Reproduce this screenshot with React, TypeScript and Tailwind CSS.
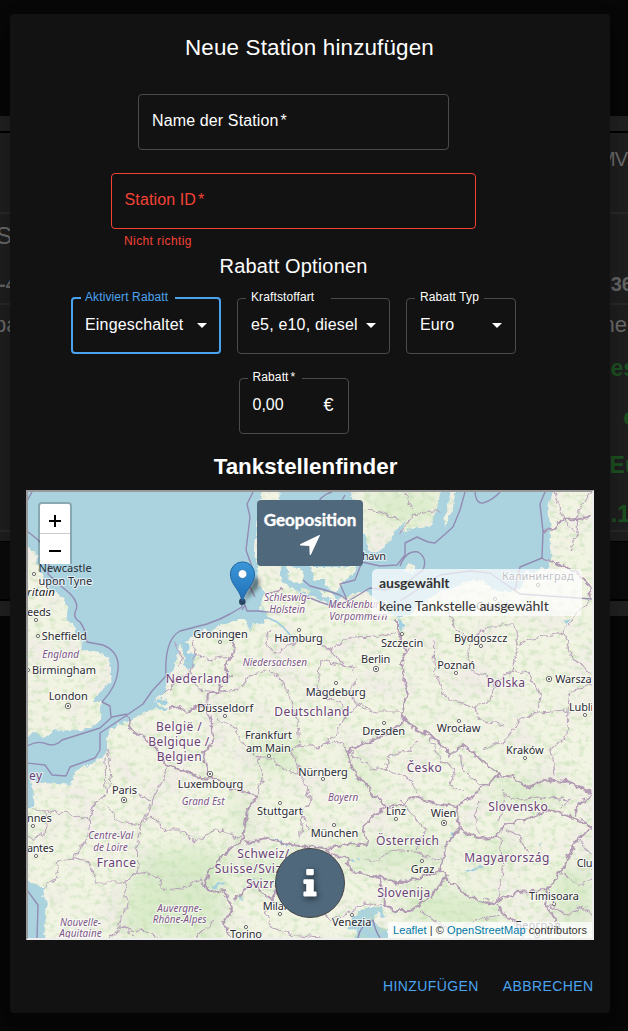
import React from "react";

type LabelKind = "city" | "country" | "region" | "nation";
type Label = [text: string, x1: number, x2: number, y: number, kind?: LabelKind];

const labels: Label[] = [
  ["upon Tyne", 38.5, 92.3, 585],
  ["ritain", 27, 55, 595.7, "nation"],
  ["eeds", 27, 50.7, 616.3],
  ["Sheffield", 41.7, 86.7, 640.3],
  ["England", 42.3, 79, 658, "region"],
  ["Birmingham", 32, 96, 674.3],
  ["London", 48.7, 87.7, 700],
  ["Groningen", 193.3, 247.7, 638.3],
  ["Nederland", 165.7, 229, 682.7, "country"],
  ["Düsseldorf", 197.3, 253.3, 712.3],
  ["Schleswig-", 264.3, 310, 601.3, "region"],
  ["Holstein", 269.3, 305, 613.3, "region"],
  ["Mecklenburg-", 328.3, 388, 608, "region"],
  ["Vorpommern", 329.3, 387.3, 620.3, "region"],
  ["Hamburg", 274.3, 322.7, 642.3],
  ["Niedersachsen", 242.7, 307, 666.3, "region"],
  ["Berlin", 361, 390.3, 662.7],
  ["Magdeburg", 305.7, 365.7, 695.7],
  ["Deutschland", 274.3, 349.3, 716, "country"],
  ["København", 331, 386, 560],
  ["Szczecin", 381, 423.3, 647],
  ["Калининград", 502, 573.7, 580.3],
  ["Gdańsk", 476, 511, 610],
  ["Bydgoszcz", 454, 507.3, 642],
  ["Poznań", 437.3, 475, 668.7],
  ["Polska", 486.7, 525, 687.3, "country"],
  ["Warszawa", 555.3, 606, 682.7],
  ["Lublin", 569, 600, 711],
  ["België /", 156, 201.7, 730.7, "country"],
  ["Belgique /", 148.3, 209.3, 745.7, "country"],
  ["Belgien", 156.7, 201.7, 760.7, "country"],
  ["ey", 29, 42, 780, "country"],
  ["Paris", 112, 137, 794],
  ["Luxembourg", 177.7, 243.3, 788.3],
  ["Grand Est", 181.7, 224.7, 805.3, "region"],
  ["nnes", 27, 51.7, 821.7],
  ["antes", 27, 53.7, 851.7],
  ["Centre-Val", 88.3, 133.3, 839, "region"],
  ["de Loire", 93.3, 127.7, 850.7, "region"],
  ["France", 96.7, 136, 867, "country"],
  ["Auvergne-", 157.3, 202, 911.7, "region"],
  ["Rhône-Alpes", 152.7, 206.7, 923.3, "region"],
  ["Nouvelle-", 60, 101, 926, "region"],
  ["Aquitaine", 59.3, 101.7, 937.3, "region"],
  ["Frankfurt", 245, 292, 738.7],
  ["am Main", 246, 290.7, 752],
  ["Dresden", 362.3, 405, 735],
  ["Nürnberg", 298.3, 347.7, 775.7],
  ["Bayern", 328, 358.3, 801, "region"],
  ["Stuttgart", 257, 302.7, 815],
  ["Linz", 386, 406, 814.7],
  ["München", 310.7, 358.3, 837.3],
  ["Österreich", 376, 439, 845, "country"],
  ["Schweiz/", 237.3, 289.3, 858.3, "country"],
  ["Suisse/Svizzera/", 214.7, 312, 873.3, "country"],
  ["Svizra", 246, 281, 888, "country"],
  ["Milano", 262.7, 297, 910],
  ["Venezia", 332, 371.3, 926],
  ["Torino", 230, 262, 937.7],
  ["Slovenija", 377.3, 430.3, 896.7, "country"],
  ["Wrocław", 436.7, 480.3, 732.3],
  ["Kraków", 506, 543.7, 753.7],
  ["Česko", 406.7, 441.7, 772.3, "country"],
  ["Slovensko", 488.3, 547.7, 811, "country"],
  ["Wien", 430.7, 456.3, 816.7],
  ["Magyarország", 464.3, 549.3, 862, "country"],
  ["Cluj", 576.7, 595, 866.7],
  ["Graz", 410.7, 434.3, 873.3],
  ["Timișoara", 529, 579, 900.3],
  ["Београд", 515.3, 560.7, 928.7],
];

const labelStyle: Record<LabelKind, { size: number; fill: string; italic: boolean }> = {
  city: { size: 11, fill: "#2b2b33", italic: false },
  country: { size: 12, fill: "#6b4276", italic: false },
  region: { size: 10, fill: "#7d5688", italic: true },
  nation: { size: 11.5, fill: "#1b1b20", italic: true },
};

const towns: [number, number][] = [
  [34, 574], [36, 620], [38, 636], [28, 670], [220, 642], [299, 630], [336, 683], [402, 634],
  [538, 585], [495, 599], [481, 646], [456, 673], [585, 715], [33, 826], [36, 856], [225, 716],
  [269, 756], [384, 723], [323, 779], [280, 803], [396, 819], [334, 825], [280, 914], [352, 915],
  [246, 927], [459, 721], [525, 758], [422, 861], [554, 904],
];

const capitals: [number, number][] = [
  [68, 706], [376, 669], [549, 679], [124, 800], [210, 774], [444, 823], [537, 935],
];

const land = [
  "M20 545 28 546 35 550 37 564 42 577 53 591 63 599 68 608 66 616 72 626 77 634 82 644 80 649 90 651.5 103 654 109 659 111 666 111 677 106 687 97 695 92 702 101 702 100 707 102 713 98 722 87 728 70 731 53 730 43 738 37 734 20 735Z",
  "M44 945 46 910 48 903 43 896 46 887 37 885 20 879V809L35 808 33 790 30 781 43 782 57 783 70 785 75 780 73 773 87 765 103 757 107 750 107 733 117 725 128 722 137 716 148 711 155 708 165 710 152 702 160 697 167 692 166 684 173 671 177 657 181 644 193 636 207 631 220 626 232 621 247 621 250 631 255 622 265 626 267 617 260 607 265 594 258 584 257 567 255 551 257 527 260 504 263 484H278L282 567 282 581 293 587 300 594 320 599 333 604 350 594 367 591 391 614 402 619 420 606 440 591 467 582 483 579 492 591 512 592 523 584 527 571 547 569 552 551 550 527 548 504 557 484H600V945Z",
  "M350 484H443L438 504 433 525 414 528 402 532 405 520 395 531 390 541 380 552 368 550 366 540 358 520Z",
  "M456 484 453 508 446 525 444 520 449 500 453 484Z",
  "M407 562 416 565 413 573 406 568Z",
  "M285 567 300 568 305 574 303 584 294 583 287 577Z",
  "M310 567H356L352 575 345 580 338 591 330 588 324 580 314 580Z",
  "M318 590 332 592 335 600 324 598ZM300 588 312 590 309 594 300 592Z",
];

const borders = [
  "M235 632 233 657 223 664 230 676 220 681 218 692 208 694 207 705 208 714 212 730 213 743 203 752 206 765 210 778",
  "M168 709 180 707 187 711 197 706 208 708",
  "M127 715 132 731 147 740 157 750 167 765 187 772 200 778 217 779 230 788 257 796 247 810 243 840 230 848 217 863 210 870 205 885 211 892 223 890 233 910 223 923 233 938",
  "M243 843 267 838 290 845 310 847 327 848 353 843 367 845 363 827 377 813 387 807 370 790 353 770 348 750 367 743 390 733 407 720 412 728 433 737 450 755 463 745 482 760 500 775 513 777 527 788 543 780 567 782 592 793",
  "M387 807 400 805 413 797 433 802 457 807 470 798 483 787 500 775",
  "M457 807 460 828 477 838 498 837 503 825 533 818 547 810 567 815 592 827 577 840 560 873 547 890 517 892 493 903 467 897 447 877 440 870 443 857 447 843 460 828",
  "M592 793 577 807 575 816",
  "M440 870 420 877 400 883 377 877 350 870 348 857 330 856 326 848",
  "M447 877 427 900 410 910 395 910 385 905 384 890 377 877",
  "M397 620 397 631 407 650 402 664 407 691 402 714 412 728",
  "M233 900 253 883 262 893 273 900 280 885 300 893 312 885 320 870 330 856",
  "M498 903 503 916 520 925 525 938M547 890 545 905 556 920 560 938",
  "M543 531 552 530 563 519 592 517M542 558 557 563 577 572 588 584 590 597",
  "M265 594 275 592 282 590",
];

const regions = [
  "M28 838 45 835 47 812 33 810M47 812 70 813 90 822 92 807 106 793 105 757",
  "M92 807 87 840 73 858 55 862 58 878 45 887M73 858 88 862 97 882 125 882 138 872 137 840 142 825 120 822 107 805",
  "M125 882 127 905 118 925 135 935M138 872 158 877 163 890 183 888 200 880 211 892",
  "M142 825 150 815 165 830 180 830 195 842 217 828 243 840M165 765 163 780 155 795 150 805 142 825",
  "M107 750 111 770 108 795M137 794 150 800M110 938 120 928 145 932 160 938M195 938 215 920",
  "M257 796 263 775 258 758 272 758 284 770 300 772 310 800 303 815 300 840",
  "M217 720 235 727 240 740 258 758M300 772 290 750 300 745 318 747 335 740 348 750M300 745 298 722 290 700 285 685 270 670 250 675 240 690 218 692",
  "M270 630 265 645 275 653 290 645 300 640 315 640 330 650 345 665 320 660 318 690 340 705 345 718 360 705 375 712 400 712",
  "M330 650 350 637 380 636 397 631M345 665 355 670M360 705 350 695 355 680M320 747 335 735 345 718",
  "M174 640 182 660 178 668M193 640 195 655 207 660 233 657M195 655 190 672 200 690 218 692M190 672 178 680 165 692",
  "M434 640 433 665 442 690 450 700 475 707 490 700 495 685 485 675 470 670 468 655 472 640 455 630 450 610",
  "M472 640 490 625 515 625 518 645 512 670 500 680 495 685M518 645 545 635 564 632 575 615 590 600M564 632 570 655 580 665 592 672",
  "M512 670 530 675 540 695 538 712 520 720 505 740 483 750M538 712 568 710 567 735 552 750 555 775M475 707 480 720 505 725M568 710 570 690 592 685",
  "M400 535 412 515 440 510M405 492 413 510M366 510 380 512 400 520",
  "M348 750 370 768 385 770 390 755 410 750 415 740M385 770 405 775 420 795M430 737 440 760 455 770 450 785 463 790",
  "M460 755 463 770 485 787M480 800 475 815 478 835M505 795 520 800 540 797 570 800 560 810M505 790 500 820",
  "M500 837 503 870 498 900M505 830 520 838 528 852M303 815 310 830M365 860 380 860 390 850 415 852 440 860M400 800 410 812 425 830 415 850",
  "M560 873 580 885 592 880M545 905 570 915 580 905 592 915M577 840 592 855M555 492 563 519 577 535 570 550M592 492 578 510 577 535",
  "M265 910 270 925 290 935 320 938M300 893 315 905 330 920 345 915 365 902 385 905M440 925 455 935 475 920 500 916M420 910 440 925",
];

const maritime = [
  "M32 492 27 501M27 531 37 539 50 552 48 574 62 587Q80 600 76 610 72 617 80 622 86 630 87 642L103 645Q120 652 118 670 117 686 102 702L110 706 111 717",
  "M27 746Q38 740 47 744 55 747 62 740L100 728 112 717 127 714",
  "M27 763 45 765 52 775 66 776 70 767 95 758 100 750V733L127 715 143 704 152 691 166 676Q164 640 180 631L207 624 220 619 230 614 242 607 240 590",
  "M242 610 245 605 247 611 258 611 278 613M255 597 247 581 252 567 246 550 250 517 247 504 253 492",
  "M465 492 460 510 453 527 435 543 428 542 417 537 405 543V555L397 565 380 566 362 562 355 580 340 584 347 600 340 595 325 590 310 586 303 580",
  "M400 566Q406 550 418 552 428 558 423 570L405 584 385 590 370 588 350 600 335 607 320 602 300 594",
  "M475 492Q476 504 483 503 493 500 500 492M545 492 540 504 543 531 542 558 520 567 515 590M400 601 440 575 470 571 490 573 520 594 592 599",
  "M27 890 38 905 37 938M315 508Q320 495 332 492M345 495 340 504",
];

const lakes = [
  "M464 872 475 868 483 864 480 869 467 873Z",
  "M270 838 280 840 290 847 282 844Z",
  "M211 886 224 882 226 883 215 889Z",
  "M252 879 256 877 257 881ZM238 897 241 893 243 899ZM350 860 354 859 354 862ZM357 859 361 858 359 861ZM450 837 454 831 452 840ZM538 847 543 840 540 847Z",
  "M181 640 187 642 188 652 196 655 195 664 187 672 184 660ZM563 621 570 619 566 624ZM400 618 405 625 402 634 398 625Z",
  "M150 704 165 698 170 703 158 704ZM152 708 168 706 163 710Z",
];

const greens = [
  "M367 494 440 494 433 518 400 525 370 510Z",
  "M462 868 500 840 520 845 500 860ZM495 778 570 790 540 808 500 800Z",
  "M340 850 440 835 435 865 350 868ZM240 860 320 855 330 880 250 890Z",
  "M400 880 500 905 490 935 410 920ZM230 800 250 805 250 850 240 840ZM350 750 380 785 370 795 350 775Z",
  "M150 850 230 850 220 935 120 935 130 880ZM250 735 300 740 300 770 260 770ZM550 870 592 870 592 930 560 930Z",
];

function EuropeMap() {
  return (
    <svg viewBox="28 492 564 446" className="block h-full w-full" aria-hidden="true">
      <defs>
        <clipPath id="land">
          {land.map((d) => <path key={d} d={d} />)}
        </clipPath>
        <filter id="woods" x="0" y="0" width="100%" height="100%" colorInterpolationFilters="sRGB">
          <feTurbulence type="fractalNoise" baseFrequency="0.14 0.18" numOctaves="4" seed="23" />
          <feColorMatrix values="0 0 0 0 .75  0 0 0 0 .87  0 0 0 0 .69  3 0 0 0 -1.45" />
        </filter>
        <filter id="fields" x="0" y="0" width="100%" height="100%" colorInterpolationFilters="sRGB">
          <feTurbulence type="fractalNoise" baseFrequency="0.03" numOctaves="4" seed="4" />
          <feColorMatrix values="0 0 0 0 .94  0 0 0 0 .92  0 0 0 0 .905  0 3 0 0 -1.35" />
        </filter>
        <filter id="coast" x="-5%" y="-5%" width="110%" height="110%" colorInterpolationFilters="sRGB">
          <feTurbulence type="fractalNoise" baseFrequency="0.13" numOctaves="3" seed="7" result="n" />
          <feDisplacementMap in="SourceGraphic" in2="n" scale="8" xChannelSelector="R" yChannelSelector="G" />
        </filter>
        <filter id="soft"><feGaussianBlur stdDeviation="9" /></filter>
        <linearGradient id="pin" x1="0" y1="0" x2="0" y2="1">
          <stop offset="0" stopColor="#3a97d8" />
          <stop offset="1" stopColor="#2170b8" />
        </linearGradient>
        <filter id="pinShadow" x="-50%" y="-50%" width="200%" height="200%"><feGaussianBlur stdDeviation="2" /></filter>
      </defs>
      <rect x="28" y="492" width="564" height="446" fill="#aad3df" />
      <g filter="url(#coast)">
        <g clipPath="url(#land)">
          <rect x="20" y="484" width="580" height="460" fill="#f2f4e3" />
          <rect x="20" y="484" width="580" height="460" filter="url(#fields)" opacity="0.8" />
          <g filter="url(#soft)" fill="#c6e4b5" opacity="0.55">
            {greens.map((d) => <path key={d} d={d} />)}
          </g>
        </g>
        <path d="M352 945 357 930 348 927 357 913 370 907 382 907 384 917 376 913 375 925 388 930V945Z" fill="#aad3df" />
        {lakes.map((d) => <path key={d} d={d} fill="#a3cfe2" />)}
      </g>
      <g clipPath="url(#land)">
        <rect x="20" y="484" width="580" height="460" filter="url(#woods)" opacity="0.55" />
      </g>
      <g filter="url(#coast)">
        <g fill="none" stroke="#b49bb8" strokeWidth="1.1" opacity="0.9">
          {regions.map((d) => <path key={d} d={d} />)}
        </g>
        <g fill="none" stroke="#a88bad" strokeWidth="2" strokeLinejoin="round" opacity="0.85">
          {borders.map((d) => <path key={d} d={d} />)}
        </g>
      </g>
      <g fill="none" stroke="#8e7fac" strokeWidth="1.4" strokeLinejoin="round" opacity="0.85">
        {maritime.map((d) => <path key={d} d={d} />)}
        <path d="M358 938Q360 925 373 920M373 920Q375 930 380 938" />
      </g>
      <path d="M266 617 277 622 284 628 292 637 298 641" fill="none" stroke="#9ccbe0" strokeWidth="1.6" />
      <g fill="#fff" stroke="#4b4b4b" strokeWidth="0.8">
        {towns.map(([x, y]) => <circle key={`${x}-${y}`} cx={x} cy={y} r="1.6" />)}
        {capitals.map(([x, y]) => <circle key={`${x}-${y}`} cx={x} cy={y} r="2.7" />)}
      </g>
      <g fill="#4b4b4b">
        {capitals.map(([x, y]) => <circle key={`${x}-${y}`} cx={x} cy={y} r="1.1" />)}
      </g>
      <g fontFamily="'Noto Sans', sans-serif" stroke="#ffffff" strokeOpacity="0.65" strokeWidth="2.2" strokeLinejoin="round" paintOrder="stroke">
        {labels.map(([text, x1, x2, y, kind = "city"]) => (
          <text
            key={text}
            x={x1}
            y={y}
            textLength={x2 - x1}
            fontSize={labelStyle[kind].size}
            fill={labelStyle[kind].fill}
            fontStyle={labelStyle[kind].italic ? "italic" : "normal"}
          >
            {text}
          </text>
        ))}
      </g>
      <path d="M243 602 254 577Q263 577 258 588Z" fill="#000" opacity="0.45" filter="url(#pinShadow)" />
      <circle cx="242.3" cy="601.7" r="3.3" fill="#2b4560" />
      <path d="M242.5 601C240.500 593.500 236.500 589 233.500 584C231.500 580.500 230.400 577.500 230.400 574A12.100 12.100 0 0 1 254.600 574C254.600 577.500 253.500 580.500 251.500 584C248.500 589 244.500 593.500 242.500 601Z" fill="url(#pin)" stroke="#2467a3" strokeWidth="1" />
      <circle cx="242.5" cy="574" r="4.300" fill="#fff" stroke="#2467a3" strokeWidth="0.5" />
    </svg>
  );
}

function Caret() {
  return (
    <svg viewBox="0 0 24 24" className="size-6 shrink-0 fill-white" aria-hidden="true">
      <path d="M7 10l5 5 5-5z" />
    </svg>
  );
}

function Field({ label, box, notch, labelTone = "text-white", children }: {
  label: React.ReactNode;
  box: string;
  notch: string;
  labelTone?: string;
  children: React.ReactNode;
}) {
  return (
    <div className={`relative flex items-center justify-between rounded pb-[2px] ${box}`}>
      <span className={`absolute h-4 bg-[#121212] text-[12px] leading-4 tracking-[0.11px] whitespace-nowrap ${notch} ${labelTone}`}>
        {label}
      </span>
      {children}
    </div>
  );
}

function PageBehind() {
  return (
    <div className="col-start-1 row-start-1 flex h-[1031px] w-full flex-col overflow-hidden bg-[#080808] pt-[116px] text-[22px] leading-7 text-[#707070]">
      <div className="h-[15px] shrink-0 bg-[#232323]" />
      <div className="h-[2px] shrink-0 bg-black" />
      <div className="flex h-[408px] shrink-0 flex-col bg-[#212121]">
        <div className="flex h-[81px] justify-end border-b-2 border-[#2b2b2b] pt-[12px]">
          <span className="mr-[1px] text-[20px] tracking-[-1px]">MV</span>
        </div>
        <div className="flex h-[91px] flex-col border-b-2 border-[#2b2b2b] pt-[8px]">
          <span className="-ml-[4px] text-[24px]">S</span>
          <div className="flex justify-between pt-[20px] font-bold text-[20px] text-[#6a6a6a]">
            <span className="-ml-[1px]">-4</span>
            <span className="-mr-[5px]">36</span>
          </div>
        </div>
        <div className="flex h-[227px] flex-col border-b-2 border-[#2b2b2b] pt-[6px]">
          <div className="flex h-[43px] justify-between">
            <span className="-ml-[6px]">pa</span>
            <span className="mr-[1px]">ne</span>
          </div>
          <div className="flex flex-col items-end gap-[20.500px] text-[23px] font-bold text-[#1e5623]">
            <span className="-mr-[8px]">es</span>
            <span className="-mr-[8px]">e</span>
            <span className="-mr-[11px]">Eu</span>
            <span className="-mr-[2px]">0.1</span>
          </div>
        </div>
      </div>
      <div className="h-[60px] shrink-0 border-t border-b-2 border-black bg-[#0c0c0c]" />
      <div className="h-[15px] shrink-0 bg-[#232323]" />
    </div>
  );
}

export default function App() {
  return (
    <div className="grid h-[1031px] w-[628px] overflow-hidden bg-[#060606] font-['Liberation_Sans',Arial,sans-serif] text-white">
      <PageBehind />
      <main className="relative col-start-1 row-start-1 mt-[14px] ml-[10px] flex h-[999px] w-[600px] flex-col rounded bg-[#121212] shadow-[0_11px_15px_-7px_rgba(0,0,0,0.2),0_24px_38px_3px_rgba(0,0,0,0.14),0_9px_46px_8px_rgba(0,0,0,0.12)]">
        <h1 className="h-20 pt-[18px] pr-px text-center text-[22.400px] leading-8 tracking-[0.16px]">Neue Station hinzufügen</h1>

        <form className="flex w-[567px] flex-col items-center">
          <div className="flex h-14 w-[311px] items-center rounded border border-[#4b4b4b] px-[13px] pb-[2px] text-[16px] tracking-[0.13px]">
            Name der Station<span className="ml-[2px]">*</span>
          </div>
          <div className="mt-[23px] w-[365px]">
            <div className="flex h-14 items-center rounded border border-[#f44336] pr-[13px] pl-[12.500px] pb-[2px] text-[16px] tracking-[0.13px] text-[#f44336]">
              Station ID<span className="ml-[2px]">*</span>
            </div>
            <p className="mt-[2px] ml-[13px] h-[21px] text-[12px] leading-5 tracking-[0.4px] text-[#f44336]">Nicht richtig</p>
          </div>
          <h2 className="h-[45px] text-[20px] leading-[28px] tracking-[0.15px]">Rabatt Optionen</h2>
          <div className="flex items-end gap-4 text-[16px]">
            <Field label="Aktiviert Rabatt" box="h-[57px] w-[150px] border-2 border-[#4ba3ee] pr-[5px] pl-[12px]" notch="-top-[10px] left-[8px] w-[94px] pl-[4px]" labelTone="text-[#4ba3ee]">
              <span className="tracking-[0.18px]">Eingeschaltet</span><Caret />
            </Field>
            <Field label="Kraftstoffart" box="h-14 w-[153px] border border-[#4b4b4b] pr-[6px] pl-[13px]" notch="-top-[10px] left-[8px] w-[85px] pl-[5px]">
              <span className="tracking-[0.18px] whitespace-nowrap">e5, e10, diesel</span><Caret />
            </Field>
            <Field label="Rabatt Typ" box="h-14 w-[110px] border border-[#4b4b4b] pr-[6px] pl-[13px]" notch="-top-[10px] left-[8px] w-[69px] pl-[5px]">
              <span className="tracking-[0.12px]">Euro</span><Caret />
            </Field>
          </div>
          <div className="mt-6">
            <Field label={<>Rabatt<span className="ml-[2px]">*</span></>} box="h-14 w-[110px] border border-[#4b4b4b] pr-[14px] pl-[13px] text-[16px]" notch="-top-[10px] left-[8px] w-[54px] pl-[5px]">
              <span>0,00</span><span className="text-[18px]">€</span>
            </Field>
          </div>
        </form>

        <section className="mt-[16px] flex flex-col px-4">
          <h2 className="h-10 pr-[9px] pt-[1px] text-center text-[22.400px] leading-8 font-bold">Tankstellenfinder</h2>
          <div className="relative h-[450px] w-[568px] overflow-hidden border-2 border-t-[#9a9a9a] border-r-[#eeeeee] border-b-[#eeeeee] border-l-[#9a9a9a]">
            <EuropeMap />
            <div className="absolute top-[10px] left-[10px] flex h-[62px] w-[34px] flex-col rounded-t border-2 border-b-0 border-black/20 bg-clip-padding">
              <button className="flex h-[30px] items-center justify-center rounded-t-[2px] border-b border-[#ccc] bg-white">
                <svg viewBox="0 0 12 12" className="mt-[4px] size-3 stroke-black stroke-2"><path d="M6 0V12M0 6H12" /></svg>
              </button>
              <button className="flex h-[30px] items-center justify-center bg-white">
                <svg viewBox="0 0 12 12" className="mt-[3px] size-3 stroke-black stroke-2"><path d="M0 6H12" /></svg>
              </button>
            </div>
            <span className="absolute top-[69px] left-[10.500px] font-['Noto_Sans',sans-serif] text-[11px] leading-[14px] tracking-[0.050px] text-[#2b2b33]">Newcastle</span>
            <button className="absolute top-2 left-[229px] flex h-[66px] w-[106px] flex-col items-center rounded bg-[#4f687c] pt-[8px] font-['Lato',sans-serif] text-[17px] leading-6 font-bold text-white [-webkit-text-stroke:0.4px_white]">
              Geoposition
              <svg viewBox="0 0 20 20" className="mt-[3px] size-5 fill-white" aria-hidden="true">
                <path d="M19.900 .4C20.100 .1 19.700 -.1 19.300 .1L.5 9.100C-.2 9.500 0 10.500 .7 10.600L9.300 11 9.700 19.500C9.800 20.200 10.700 20.300 11 19.600Z" />
              </svg>
            </button>
            <div className="absolute top-[77px] left-[344px] h-[47px] w-[210px] rounded-[5px] bg-white/70 pt-[2px] pl-[7px] font-['Lato',sans-serif] text-[14px] leading-6 text-[#333]">
              <h4 className="h-6 font-bold">ausgewählt</h4>
              <p className="-mt-px">keine Tankstelle ausgewählt</p>
            </div>
            <button className="absolute top-[356px] left-[247px] flex size-[70px] items-center justify-center rounded-full border border-[#444] bg-[#4f687c] text-white">
              <svg viewBox="0 0 14 28" className="h-7 w-[14px] fill-white drop-shadow-[1px_2px_3px_rgba(0,0,0,0.6)]" aria-hidden="true">
                <rect x="3.200" y="0" width="7.600" height="6.200" rx="1.100" />
                <path d="M1.500 10.200H9.700a1.100 1.100 0 0 1 1.100 1.100V22.600H12.500a1.100 1.100 0 0 1 1.100 1.100V26.400a1.100 1.100 0 0 1-1.100 1.100H1.500A1.100 1.100 0 0 1 .4 26.400V23.700a1.100 1.100 0 0 1 1.100-1.100H3.200V15H1.500A1.100 1.100 0 0 1 .4 13.900V11.300a1.100 1.100 0 0 1 1.100-1.100Z" />
              </svg>
            </button>
            <div className="absolute right-0 bottom-0 h-4 w-[204px] bg-white/75 pl-[5px] text-[11px] leading-4 tracking-[0.070px] whitespace-nowrap text-[#333]">
              <a className="text-[#0078a8]">Leaflet</a> | © <a className="text-[#0078a8]">OpenStreetMap</a> contributors
            </div>
          </div>
        </section>

        <footer className="mt-[36px] flex justify-end gap-6 pr-[16.500px] text-[14px] leading-5 tracking-[0.4px] text-[#4ba3ee]">
          <button>HINZUFÜGEN</button>
          <button>ABBRECHEN</button>
        </footer>
      </main>
    </div>
  );
}
